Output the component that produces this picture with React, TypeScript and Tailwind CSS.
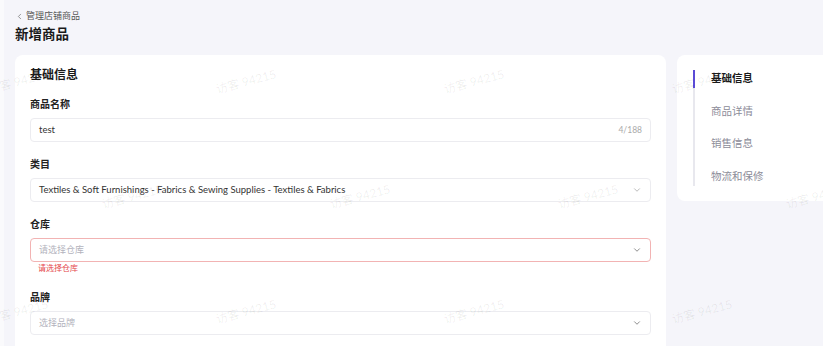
import { ChevronDown, ChevronLeft } from "lucide-react";

const navItems = [
  { label: "基础信息", active: true },
  { label: "商品详情" },
  { label: "销售信息" },
  { label: "物流和保修" },
];

// watermark grid: staggered rows
const marks = [0, 1, 2].flatMap((row) =>
  [0, 1, 2, 3].map((col) => ({
    x: col * 228 + (row === 1 ? 132 : 18),
    y: 82 + row * 115,
  }))
);

function Label({ children }: { children: React.ReactNode }) {
  return (
    <div className="mb-[7px] text-[10px] leading-[14px] font-semibold text-[#222]">
      {children}
    </div>
  );
}

function Select({
  value,
  placeholder,
  error,
  chevron = "text-[#555]",
}: {
  value?: string;
  placeholder?: string;
  error?: boolean;
  chevron?: string;
}) {
  return (
    <div
      className={[
        "flex h-[24px] items-center justify-between rounded-[4px] border bg-white pr-[8px] pl-[8px]",
        error ? "border-[#f2b3b3]" : "border-[#ececf0]",
      ].join(" ")}
    >
      {value ? (
        <span className="text-[9.5px] text-[#333]">{value}</span>
      ) : (
        <span className="text-[9px] text-[#b3b3bd]">{placeholder}</span>
      )}
      <ChevronDown className={`h-[10px] w-[10px] ${chevron}`} strokeWidth={1.6} />
    </div>
  );
}

export default function App() {
  return (
    <div className="relative flex h-[346px] w-[823px] overflow-hidden bg-[#f5f5fa] font-[Lato,'Noto_Sans_CJK_SC',sans-serif]">
      <div className="w-[4px] shrink-0 bg-[#fafafc]" />
      <div className="flex min-w-0 flex-1 flex-col pt-[10px] pl-[11px]">
        <div className="flex items-center gap-[2px] text-[9px] leading-[12px] text-[#555]">
          <ChevronLeft className="h-[9px] w-[9px]" strokeWidth={1.6} />
          <span>管理店铺商品</span>
        </div>
        <h1 className="mt-[2px] text-[13.5px] leading-[20px] font-bold text-[#1a1a1a]">
          新增商品
        </h1>

        <div className="mt-[11px] flex flex-1 gap-[11px]">
          <div className="w-[651px] shrink-0 rounded-t-[8px] bg-white px-[15px] pt-[12px]">
            <div className="text-[12px] leading-[16px] font-bold text-[#1a1a1a]">
              基础信息
            </div>

            <div className="mt-[14px]">
              <Label>商品名称</Label>
              <div className="flex h-[24px] items-center justify-between rounded-[4px] border border-[#ececf0] px-[8px]">
                <span className="text-[9.5px] text-[#333]">test</span>
                <span className="text-[8.5px] text-[#aaa]">4/188</span>
              </div>
            </div>

            <div className="mt-[15px]">
              <Label>类目</Label>
              <Select
                value="Textiles & Soft Furnishings - Fabrics & Sewing Supplies - Textiles & Fabrics"
                chevron="text-[#999]"
              />
            </div>

            <div className="mt-[15px]">
              <Label>仓库</Label>
              <Select placeholder="请选择仓库" error />
              <div className="pl-[8px] text-[8px] leading-[12px] text-[#e5484d]">
                请选择仓库
              </div>
            </div>

            <div className="mt-[16px]">
              <Label>品牌</Label>
              <Select placeholder="选择品牌" />
            </div>
          </div>

          <div className="h-[146px] flex-1 rounded-l-[8px] bg-white pt-[15px] pl-[16px]">
            <div className="flex flex-col gap-[14.5px] border-l-[2px] border-[#e8e8ee]">
              {navItems.map((item) => (
                <div key={item.label} className="relative flex h-[18px] items-center pl-[16px]">
                  {item.active && (
                    <span className="absolute top-0 left-[-2px] h-[18px] w-[2px] bg-[#5b4bd6]" />
                  )}
                  <span
                    className={
                      item.active
                        ? "text-[10.5px] font-bold text-[#1a1a1a]"
                        : "text-[10.5px] text-[#8c8c99]"
                    }
                  >
                    {item.label}
                  </span>
                </div>
              ))}
            </div>
          </div>
        </div>
      </div>

      {marks.map((m, i) => (
        <span
          key={i}
          className="pointer-events-none absolute -translate-x-1/2 -translate-y-1/2 -rotate-[15deg] text-[12px] whitespace-nowrap text-[rgba(0,0,0,0.07)]"
          style={{ left: m.x, top: m.y }}
        >
          访客 94215
        </span>
      ))}
    </div>
  );
}
